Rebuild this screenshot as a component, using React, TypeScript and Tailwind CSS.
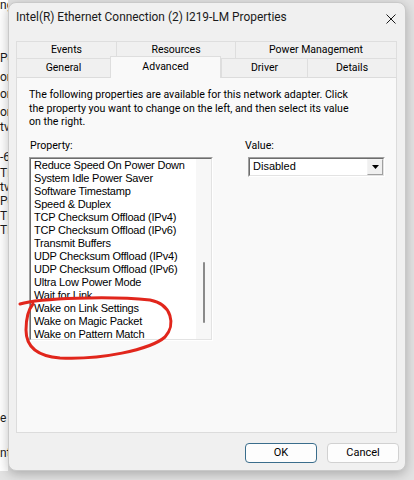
const ui = "font-['Roboto','Liberation_Sans',sans-serif]";
const classic = "font-['Liberation_Sans','Arial',sans-serif]";

const properties = [
  "Reduce Speed On Power Down",
  "System Idle Power Saver",
  "Software Timestamp",
  "Speed & Duplex",
  "TCP Checksum Offload (IPv4)",
  "TCP Checksum Offload (IPv6)",
  "Transmit Buffers",
  "UDP Checksum Offload (IPv4)",
  "UDP Checksum Offload (IPv6)",
  "Ultra Low Power Mode",
  "Wait for Link",
  "Wake on Link Settings",
  "Wake on Magic Packet",
  "Wake on Pattern Match",
];

function BehindWindow() {
  // the window behind the dialog, only a sliver of it shows on the left
  return (
    <div className={`h-[471px] w-[8px] shrink-0 overflow-hidden bg-white whitespace-nowrap text-[12px] leading-[14px] text-[#1b1b1b] ${ui}`}>
      <div className="-mt-[2px]">ng</div>
      <div className="mt-[39px]">Pe</div>
      <div className="mt-[5px]">or</div>
      <div className="mt-[3px]">or</div>
      <div className="mt-[4px]">or</div>
      <div className="mt-[1px]">tv</div>
      <div className="mt-[16px]">-6</div>
      <div className="mt-[2px]">TP</div>
      <div>tv</div>
      <div>Pe</div>
      <div className="mt-[1px]">TI</div>
      <div>TP</div>
      <div className="mt-[174px]">e</div>
      <div className="mt-[21px]">nt</div>
    </div>
  );
}

function Tab({ label, className = "" }: { label: string; className?: string }) {
  return (
    <div
      className={`flex items-center justify-center border-l border-t border-[#dedede] bg-[#f0f0f0] text-[10.5px] text-black ${className}`}
    >
      {label}
    </div>
  );
}

function Tabs() {
  return (
    <div className="mt-[9px] pl-[7px] pr-[8px]">
      <div className="flex h-[17px]">
        <Tab label="Events" className="w-[100px]" />
        <Tab label="Resources" className="w-[119px]" />
        <Tab label="Power Management" className="flex-1 border-r" />
      </div>
      <div className="-mt-[2px] flex h-[21px] items-end">
        <Tab label="General" className="h-[19px] w-[94px]" />
        <div className="relative z-10 flex h-[22px] w-[111px] self-start items-center justify-center border-x border-t border-[#dedede] bg-[#f9f9f9] pb-[2px] text-[10.5px] text-black">
          Advanced
        </div>
        <Tab label="Driver" className="h-[19px] w-[86px]" />
        <Tab label="Details" className="h-[19px] flex-1 border-r" />
      </div>
    </div>
  );
}

function PropertyList() {
  return (
    <div className="mt-[5px] h-[184px] w-[184px] border border-b-white border-l-[#a0a0a0] border-r-white border-t-[#a0a0a0]">
      <div className="flex h-full border border-b-[#e3e3e3] border-l-[#6d6d6d] border-r-[#e3e3e3] border-t-[#6d6d6d] bg-white">
        <div className={`flex-1 overflow-hidden pl-[3px] text-[11px] leading-[13px] tracking-[-0.2px] text-black whitespace-nowrap ${classic}`}>
          {properties.map((p) => (
            <div key={p}>{p}</div>
          ))}
        </div>
        <div className="flex w-[15px] justify-center bg-[#f7f7f7]">
          <div className="mt-[103px] h-[61px] w-[2px] rounded-full bg-[#8a8a8a]" />
        </div>
      </div>
    </div>
  );
}

function ValueSelect() {
  return (
    <div className="ml-[3px] mt-[5px] h-[20px] w-[137px] border border-b-white border-l-[#a0a0a0] border-r-white border-t-[#a0a0a0]">
      <div className="flex h-full items-center border border-b-[#e3e3e3] border-l-[#6d6d6d] border-r-[#e3e3e3] border-t-[#6d6d6d] bg-white">
        <span className={`flex-1 pl-[3px] text-[11px] text-black ${classic}`}>Disabled</span>
        <div className="flex h-full w-[16px] items-center justify-center border border-b-[#a0a0a0] border-l-[#f4f4f4] border-r-[#a0a0a0] border-t-[#f4f4f4] bg-[#f0f0f0]">
          <svg width="7" height="4" viewBox="0 0 7 4">
            <path d="M0 0h7L3.5 4z" fill="#000" />
          </svg>
        </div>
      </div>
    </div>
  );
}

function AdvancedPanel() {
  return (
    <div className="h-[356px] border border-[#dcdcdc] bg-[#f9f9f9] px-[12px] pt-[10px] text-black">
      <p className="whitespace-nowrap text-[10.6px] leading-[13.5px]">
        The following properties are available for this network adapter. Click
        <br />
        the property you want to change on the left, and then select its value
        <br />
        on the right.
      </p>
      <div className="mt-[10px] grid grid-cols-[184px_1fr] gap-x-[32px]">
        <div>
          <div className="pl-[1px] text-[10.6px] leading-[13px]">Property:</div>
          <PropertyList />
        </div>
        <div>
          <div className="text-[10.6px] leading-[13px]">Value:</div>
          <ValueSelect />
        </div>
      </div>
    </div>
  );
}

function Dialog() {
  return (
    <div
      className={`mt-[2px] flex h-[469px] w-[398px] shrink-0 flex-col rounded-[8px] border border-[#c9c9c9] bg-[#f0f0f0] shadow-[0_3px_12px_rgba(0,0,0,0.25)] ${ui}`}
    >
      <div className="flex h-[29px] items-center justify-between pl-[7px] pr-[9px]">
        <span className="text-[11.9px] text-[#1a1a1a]">
          Intel(R) Ethernet Connection (2) I219-LM Properties
        </span>
        <svg width="10" height="10" viewBox="0 0 10 10" className="mt-[2px]">
          <path d="M0.5 0.5l9 9M9.5 0.5l-9 9" stroke="#1a1a1a" strokeWidth="1" />
        </svg>
      </div>
      <Tabs />
      <div className="pl-[7px] pr-[8px]">
        <AdvancedPanel />
      </div>
      <div className="mt-[10px] flex justify-end gap-[10px] pr-[6px]">
        <button className="h-[20px] w-[72px] rounded-[4px] border border-[#3a6d8c] bg-[#fdfdfd] text-[11px] text-black">
          OK
        </button>
        <button className="h-[20px] w-[72px] rounded-[4px] border border-[#d1d1d1] bg-[#fdfdfd] text-[11px] text-black">
          Cancel
        </button>
      </div>
    </div>
  );
}

export default function App() {
  return (
    <div className="relative flex h-[480px] w-[414px] overflow-hidden bg-[#e3e3e3]">
      <BehindWindow />
      <Dialog />
      {/* hand-drawn red marker around the Wake on ... entries */}
      <svg
        className="pointer-events-none absolute left-0 top-0"
        width="414"
        height="480"
        viewBox="0 0 414 480"
      >
        <path
          d="M20 304 C40 298 110 296 150 300 C172 304 176 325 165 337 C150 350 100 360 60 358 C35 356 26 345 26 330 C26 318 28 310 33 304"
          fill="none"
          stroke="#e1261c"
          strokeWidth="3"
          strokeLinecap="round"
        />
      </svg>
    </div>
  );
}
